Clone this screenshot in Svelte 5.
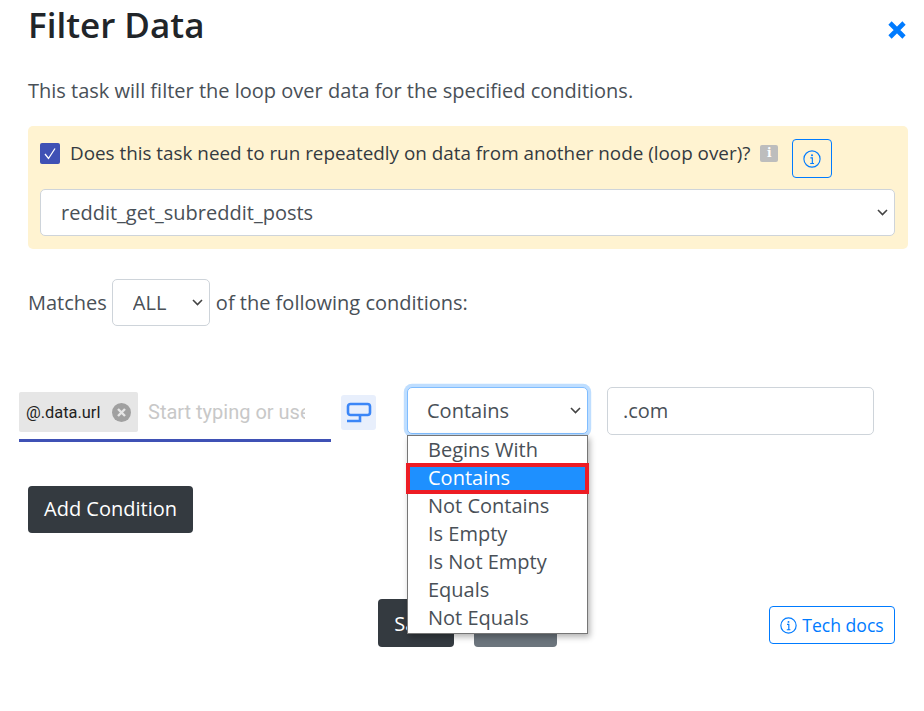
<script>
  const options = ['Begins With', 'Contains', 'Not Contains', 'Is Empty', 'Is Not Empty', 'Equals', 'Not Equals'];
</script>

<div class="modal">
  <header class="head">
    <h1>Filter Data</h1>
    <svg class="close" width="20" height="20" viewBox="0 0 20 20" aria-label="Close">
      <path d="M3 3 L17 17 M17 3 L3 17" stroke="#007bff" stroke-width="4.6" fill="none" />
    </svg>
  </header>

  <p class="intro">This task will filter the loop over data for the specified conditions.</p>

  <section class="loop">
    <div class="loop-row">
      <span class="check">
        <svg width="20" height="21" viewBox="0 0 20 21"><path d="M5 11 L8.5 15.5 L15 5.5" stroke="#fff" stroke-width="1.3" fill="none" /></svg>
      </span>
      <span class="loop-label">Does this task need to run repeatedly on data from another node (loop over)?</span>
      <span class="hint">i</span>
      <button class="info-btn">
        <svg width="18" height="18" viewBox="0 0 16 16" fill="none" stroke="#007bff">
          <circle cx="8" cy="8" r="7.2" stroke-width="1" />
          <path d="M6.6 7 H8.3 V12 M6.4 12 H9.8" stroke-width="1" />
          <circle cx="8" cy="4.6" r="0.9" fill="#007bff" stroke="none" />
        </svg>
      </button>
    </div>
    <select class="field wide">
      <option>reddit_get_subreddit_posts</option>
    </select>
  </section>

  <div class="matches">
    <span>Matches</span>
    <select class="field all"><option>ALL</option></select>
    <span>of the following conditions:</span>
  </div>

  <div class="condition">
    <div class="tag-input">
      <span class="chip">
        <span class="chip-text">@.data.url</span>
        <svg width="19" height="19" viewBox="0 0 19 19">
          <circle cx="9.5" cy="9.5" r="9.5" fill="#a0a0a0" />
          <path d="M6 6 L13 13 M13 6 L6 13" stroke="#e6e6e6" stroke-width="2.4" />
        </svg>
      </span>
      <span class="placeholder">Start typing or use</span>
    </div>
    <span class="mode-btn">
      <svg width="26" height="24" viewBox="0 0 26 24" fill="none" stroke="#3b86f7" stroke-width="2.6">
        <rect x="2" y="3" width="22" height="11" rx="2.5" />
        <path d="M14 14 V20 H1" />
      </svg>
    </span>
    <div class="compare">
      <select class="field focus"><option>Contains</option></select>
      <ul class="menu">
        {#each options as opt}
          <li class:active={opt === 'Contains'}>{opt}</li>
        {/each}
      </ul>
    </div>
    <input class="field value" value=".com" />
  </div>

  <button class="btn dark add">Add Condition</button>

  <footer class="foot">
    <button class="btn dark save">Save</button>
    <button class="btn grey cancel">Cancel</button>
    <button class="docs">
      <svg width="17" height="17" viewBox="0 0 16 16" fill="none" stroke="#007bff">
        <circle cx="8" cy="8" r="7.2" stroke-width="1.1" />
        <path d="M6.6 7 H8.3 V12 M6.4 12 H9.8" stroke-width="1.1" />
        <circle cx="8" cy="4.6" r="0.9" fill="#007bff" stroke="none" />
      </svg>
      Tech docs
    </button>
  </footer>
</div>

<style>
  :global(body) {
    background: #fff;
    font-family: "Open Sans", sans-serif;
    color: #343a40;
    overflow: hidden;
  }

  .modal {
    width: 924px;
    height: 711px;
    box-sizing: border-box;
    padding: 0 16px 0 28px;
    font-size: 20px;
    line-height: 27px;
  }

  .head {
    display: flex;
    justify-content: space-between;
    align-items: flex-start;
    height: 77px;
  }

  h1 {
    margin: 3px 0 0;
    font-size: 35px;
    line-height: 44px;
    font-weight: 600;
    color: #212529;
  }

  .close {
    margin: 20px 1px 0 0;
  }

  .intro {
    margin: 0 0 22px;
    font-size: 20px;
    color: #495057;
  }

  .loop {
    background: #fff3d1;
    border-radius: 5px;
    padding: 13px 13px 13px 12px;
    height: 123px;
    box-sizing: border-box;
  }

  .loop-row {
    display: flex;
    align-items: flex-start;
    height: 50px;
  }

  .check {
    width: 20px;
    height: 21px;
    margin-top: 4px;
    border-radius: 2px;
    background: #3f51b5;
    display: flex;
  }

  .loop-label {
    margin-left: 10px;
    margin-top: 1px;
    color: #343a40;
    font-size: 18.85px;
    white-space: nowrap;
  }

  .hint {
    width: 18px;
    height: 17px;
    margin: 6px 0 0 10px;
    border-radius: 2px;
    background: #bdbdbd;
    color: #fff;
    font-family: "DejaVu Serif", serif;
    font-size: 12px;
    font-weight: 700;
    line-height: 17px;
    text-align: center;
  }

  .info-btn {
    width: 40px;
    height: 39px;
    margin-left: 14px;
    padding: 0;
    display: flex;
    align-items: center;
    justify-content: center;
    background: transparent;
    border: 1px solid #007bff;
    border-radius: 4px;
  }

  .field {
    box-sizing: border-box;
    height: 47px;
    background-color: #fff;
    border: 1px solid #ced4da;
    border-radius: 5px;
    color: #495057;
    font-family: inherit;
    font-size: 20px;
    outline: none;
  }

  select.field {
    appearance: none;
    background-image: url("data:image/svg+xml,%3Csvg xmlns='http://www.w3.org/2000/svg' width='11' height='7'%3E%3Cpath d='M1 1l4.5 4.5L10 1' fill='none' stroke='%23444' stroke-width='1.6'/%3E%3C/svg%3E");
    background-repeat: no-repeat;
    background-position: right 6px center;
  }

  .wide {
    width: 855px;
    padding: 0 20px;
    display: block;
  }

  .matches {
    display: flex;
    align-items: center;
    gap: 6px;
    margin-top: 30px;
    height: 47px;
    color: #495057;
  }

  .all {
    width: 98px;
    margin-left: -1px;
    padding: 0 20px;
  }

  .condition {
    display: flex;
    align-items: flex-start;
    margin: 61px 0 0 -9px;
    height: 99px;
  }

  .tag-input {
    box-sizing: border-box;
    width: 312px;
    height: 54px;
    margin-top: 1px;
    padding-top: 4px;
    border-bottom: 3px solid #3f51b5;
    display: flex;
    align-items: flex-start;
    overflow: hidden;
  }

  .chip {
    display: flex;
    align-items: center;
    justify-content: space-between;
    box-sizing: border-box;
    height: 40px;
    width: 119px;
    padding: 0 7px;
    background: #e6e6e6;
    border-radius: 2px;
    flex: none;
  }

  .chip-text {
    font-family: Roboto, sans-serif;
    font-size: 16.4px;
    color: #222;
    white-space: nowrap;
  }

  .placeholder {
    margin-left: 10px;
    width: 157px;
    overflow: hidden;
    white-space: nowrap;
    font-family: Roboto, sans-serif;
    font-size: 20px;
    line-height: 40px;
    color: #c8c8c8;
  }

  .mode-btn {
    width: 35px;
    height: 35px;
    margin: 8px 0 0 10px;
    background: #e8effc;
    border-radius: 3px;
    display: flex;
    align-items: center;
    justify-content: center;
  }

  .compare {
    position: relative;
    margin-left: 31px;
  }

  .focus {
    display: block;
    width: 181px;
    padding: 0 19px;
    border-color: #80bdff;
    box-shadow: 0 0 0 3.2px #bfdeff;
  }

  .menu {
    position: absolute;
    z-index: 2;
    top: 48px;
    left: 0;
    width: 181px;
    height: 199px;
    box-sizing: border-box;
    margin: 0;
    padding: 0;
    list-style: none;
    background: #fff;
    border: 1px solid #767676;
    box-shadow: 2px 3px 6px rgba(0, 0, 0, 0.3);
    font-size: 20px;
    line-height: 28px;
    color: #495057;
  }

  .menu li {
    position: relative;
    padding-left: 20px;
    box-sizing: border-box;
    height: 28px;
  }

  .menu li.active {
    background: #1e90ff;
    color: #fff;
  }

  /* red annotation box drawn over the highlighted option */
  .menu li.active::after {
    content: "";
    position: absolute;
    inset: -1px -2px -2px -2px;
    border: 4.5px solid #ed1c24;
  }

  .value {
    width: 267px;
    height: 48px;
    margin-left: 19px;
    padding: 0 15px 2px;
  }

  .btn {
    box-sizing: border-box;
    height: 47px;
    border: none;
    border-radius: 4px;
    color: #fff;
    font-family: inherit;
    font-size: 20px;
  }

  .dark {
    background: #343a40;
  }

  .grey {
    background: #6c757d;
  }

  .add {
    display: block;
    width: 165px;
    padding: 0 0 2px;
  }

  .foot {
    display: flex;
    align-items: flex-start;
    margin-top: 66px;
    margin-left: 350px;
  }

  .save {
    width: 76px;
    height: 48px;
  }

  .cancel {
    width: 83px;
    height: 48px;
    margin-left: 20px;
  }

  .docs {
    width: 126px;
    height: 38px;
    margin: 7px 0 0 212px;
    padding: 0;
    display: flex;
    align-items: center;
    justify-content: center;
    gap: 5px;
    background: #fff;
    border: 1px solid #007bff;
    border-radius: 4px;
    color: #007bff;
    font-family: inherit;
    font-size: 17.6px;
  }
</style>
